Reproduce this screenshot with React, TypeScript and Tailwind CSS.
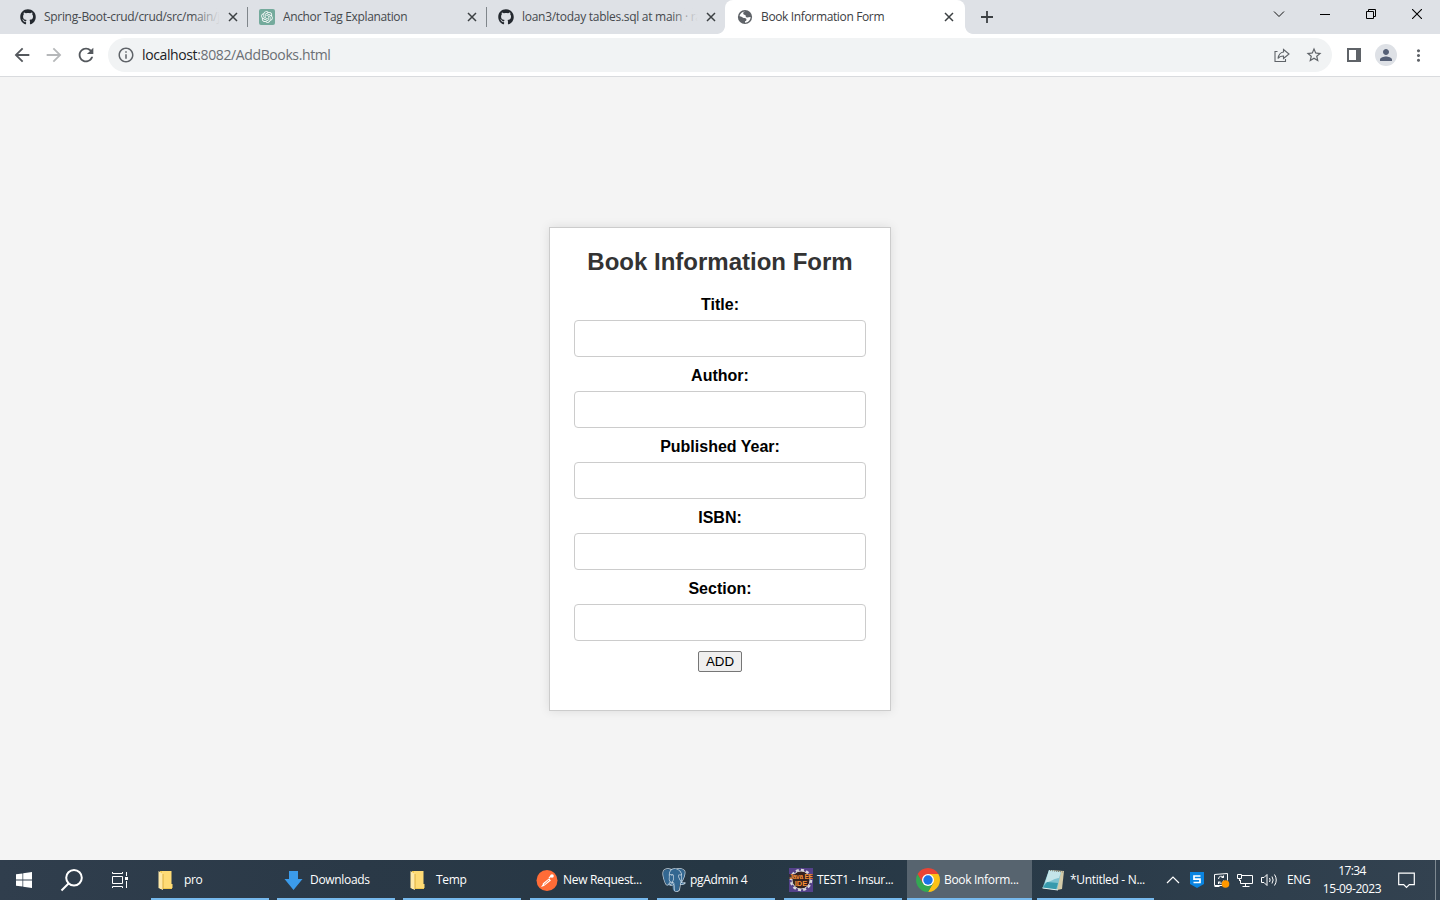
import type { ReactNode } from "react";
import { FaGithub } from "react-icons/fa";
import { RiOpenaiFill } from "react-icons/ri";
import { SiPostgresql } from "react-icons/si";
import { MdArrowBack, MdArrowForward, MdRefresh, MdInfoOutline, MdStarBorder, MdPerson, MdMoreVert } from "react-icons/md";

function CloseIcon() {
  return (
    <svg width="10" height="10" viewBox="0 0 10 10" fill="none" stroke="#3c4043" strokeWidth="1.5">
      <path d="M1 1l8 8M9 1l-8 8" />
    </svg>
  );
}

function GlobeIcon() {
  return (
    <svg width="16" height="16" viewBox="0 0 16 16">
      <circle cx="8" cy="8" r="7.1" fill="#5f6368" />
      <path d="M8.6 2.4c-2 0-2.6 1-2.3 2.3.4 1.3 1.6.8 2.2 1.5.5.7-.1 1.6 1 2.1 1.3.6 2.6-.6 4.1-.3-.1 3.2-2.6 5.7-5.6 5.7v-1.5c1.3-.1 1.6-1.1 1.4-2-.3-1.3-1.7-.9-2.8-1.3C5.200 8.400 4.800 7.400 2.600 7.200 2.900 4.600 5.300 2.300 8.600 2.400z" fill="#fff" />
      <path d="M8.300 4.100l2.500-1.700 2.100 2.700-1.500 1.500-2-.5z" fill="#5f6368" />
    </svg>
  );
}

type TabProps = { icon: ReactNode; title: string; text: string; fade?: boolean; divider?: boolean };

function Tab({ icon, title, text, fade, divider }: TabProps) {
  return (
    <div className="relative flex h-[34px] w-[239px] items-center pl-3 pr-[10px]">
      <span className="flex w-6 shrink-0">{icon}</span>
      <span className={`relative w-[176px] shrink-0 overflow-hidden whitespace-nowrap text-[12px] text-[#45494d] ${text}`}>
        {title}
        {fade && <span className="absolute inset-y-0 right-0 w-7 bg-linear-to-r from-[#dee1e600] to-[#dee1e6]" />}
      </span>
      <span className="flex w-[22px] shrink-0 justify-center pl-[3px]">
        <CloseIcon />
      </span>
      {divider && <span className="absolute right-[-1px] top-[7px] h-5 w-px bg-[#80868b]" />}
    </div>
  );
}

function TabStrip() {
  return (
    <div className="flex h-[34px] bg-[#dee1e6] pl-2">
      <Tab icon={<FaGithub size={16} color="#24292f" />} title="Spring-Boot-crud/crud/src/main/java" text="tracking-[-0.31px]" fade divider />
      <Tab
        icon={
          <span className="flex h-4 w-4 items-center justify-center rounded-[2px] bg-[#74aa9c]">
            <RiOpenaiFill size={14} color="#fff" />
          </span>
        }
        title="Anchor Tag Explanation"
        text="tracking-[-0.36px]"
        divider
      />
      <Tab icon={<FaGithub size={16} color="#24292f" />} title="loan3/today tables.sql at main · rahul" text="tracking-[-0.28px]" fade />
      <div className="relative flex h-[34px] w-[240px] items-center rounded-t-lg bg-white pl-3">
        <span className="absolute bottom-0 left-[-8px] h-2 w-2 bg-[radial-gradient(circle_at_0_0,#dee1e6_7.500px,#fff_8.200px)]" />
        <span className="absolute bottom-0 right-[-8px] h-2 w-2 bg-[radial-gradient(circle_at_100%_0,#dee1e6_7.500px,#fff_8.200px)]" />
        <span className="w-6 shrink-0"><GlobeIcon /></span>
        <span className="w-[183px] whitespace-nowrap text-[12px] tracking-[-0.36px] text-[#3c4043]">Book Information Form</span>
        <CloseIcon />
      </div>
      <div className="flex w-11 items-center justify-center">
        <svg width="12" height="12" viewBox="0 0 12 12" stroke="#3c4043" strokeWidth="1.8"><path d="M6 0v12M0 6h12" /></svg>
      </div>
      <div className="ml-auto flex h-[28px] items-center text-black">
        <span className="flex w-[46px] justify-center"><svg width="12" height="12" viewBox="0 0 12 12" fill="none" stroke="#111"><path d="M1 3.500l5 5 5-5" /></svg></span>
        <span className="flex w-[46px] justify-center"><svg width="10" height="10" viewBox="0 0 10 10"><path d="M0 5h10v1H0z" /></svg></span>
        <span className="flex w-[46px] justify-center"><svg width="10" height="10" viewBox="0 0 10 10" fill="none" stroke="#000"><path d="M.5 2.500h7v7h-7zM2.500 2.500v-2h7v7h-2" /></svg></span>
        <span className="flex w-[46px] justify-center"><svg width="10" height="10" viewBox="0 0 10 10" stroke="#000" strokeWidth="1.1"><path d="M0 0l10 10M10 0L0 10" /></svg></span>
      </div>
    </div>
  );
}

function Toolbar() {
  return (
    <div className="flex h-[43px] items-start border-b border-[#d9dbde] bg-white pt-1">
      <div className="flex h-[34px] w-[108px] items-center pl-[11px]">
        <span className="w-8"><MdArrowBack size={22} color="#54585d" /></span>
        <span className="w-8"><MdArrowForward size={22} color="#b6b8ba" /></span>
        <MdRefresh size={22} color="#54585d" />
      </div>
      <div className="flex h-[34px] w-[1224px] items-center rounded-full bg-[#f1f3f4] pl-[9px] pr-[9px]">
        <MdInfoOutline size={18} color="#5f6368" />
        <span className="ml-[7px] mt-[-1px] whitespace-nowrap text-[14px] tracking-[-0.38px] text-[#6b6f74]">
          <span className="text-[#202124]">localhost</span>:8082/AddBooks.html
        </span>
        <svg className="ml-auto" width="16" height="16" viewBox="0 0 16 16" fill="none" stroke="#5f6368" strokeWidth="1.1">
          <path d="M3.500 4.500H1v10h10.500V12" />
          <path d="M9.500 2.500L15 7l-5.500 4.500V9c-2.500 0-4.300.7-5.500 2.500C4.500 8 6.200 5.500 9.500 5z" />
        </svg>
        <MdStarBorder className="ml-[15px]" size={18} color="#5f6368" />
      </div>
      <div className="flex h-[34px] flex-1 items-center pl-[15px]">
        <svg width="14" height="14" viewBox="0 0 14 14"><path d="M0 0h14v14H0zM2 2v10h7V2z" fill="#5f6368" fillRule="evenodd" /></svg>
        <span className="ml-[14px] flex h-[22px] w-[22px] items-center justify-center rounded-full bg-[#dee1e6]"><MdPerson size={18} color="#566076" /></span>
        <MdMoreVert className="ml-3" size={19} color="#5f6368" />
      </div>
    </div>
  );
}

const fields = ["Title:", "Author:", "Published Year:", "ISBN:", "Section:"];

function BookForm() {
  return (
    <form className="flex h-[484px] w-[342px] flex-col items-center border border-[#ccc] bg-white pt-[20px] font-['Liberation_Sans',Arial,sans-serif] shadow-[0_0_10px_rgba(0,0,0,0.1)]">
      <h2 className="mb-[20px] h-7 whitespace-nowrap text-[24px] font-bold leading-7 text-[#333]">Book Information Form</h2>
      {fields.map((label) => (
        <label key={label} className="mb-[10px] flex flex-col items-center text-[16px] font-bold leading-[18px] text-black">
          <span className="mb-[6px] h-[18px]">{label}</span>
          <input type="text" className="h-[37px] w-[292px] rounded-[4px] border border-[#ccc] bg-white p-2" />
        </label>
      ))}
      <button type="button" className="h-[21px] w-[44px] rounded-[2px] border border-[#767676] bg-[#efefef] text-[13.333px] leading-[18px] text-black">ADD</button>
    </form>
  );
}

function FolderIcon() {
  return (
    <svg width="24" height="24" viewBox="0 0 24 24">
      <path d="M4 3h11v13h1v5H4z" fill="#f2c94f" />
      <path d="M6 3h9.500v13h1v4H6z" fill="#ffdb75" />
      <path d="M2.500 3l4.500 3v16l-4.500-2z" fill="#ffe9a8" />
      <path d="M7 6v15" stroke="#dcae3e" />
    </svg>
  );
}

function DownloadIcon() {
  return <svg width="24" height="24" viewBox="0 0 24 24"><path d="M7 3h9v8h4.500L11.500 22 2.500 11H7z" fill="#3b9bea" /></svg>;
}

function PostmanIcon() {
  return (
    <svg width="24" height="24" viewBox="0 0 24 24">
      <circle cx="12" cy="12.500" r="10.500" fill="#ff6c37" />
      <path d="M6 19l2-3 6-5.500 2 2L9 18z" fill="#fff" />
      <path d="M14 10l2.500-2.500M8 16l6.500-5" stroke="#fff" strokeWidth="1.300" />
      <circle cx="17" cy="8" r="1.800" fill="#fff" />
      <path d="M9 16.500l5-4.500" stroke="#ff6c37" strokeWidth=".8" />
    </svg>
  );
}

function ElephantIcon() {
  return (
    <span className="relative flex h-6 w-6">
      <svg className="absolute inset-0" width="24" height="24" viewBox="0 0 24 24">
        <path d="M1 6C1 2 4 .6 8 1.500 10 .6 13 .3 15 1c4-1 8 .8 8 4.500 0 3-1.500 6-3.200 8.500 1.500.8 2.700.9 3.200 1-1 1.800-3 2-5.500 1.800L17 21c-.5 2-2 2.500-3.500 2.500-2 0-2.700-1.500-2.900-3.500l-.2-3C8.500 17 7.500 17 6 17.500 3 15 1 10 1 6z" fill="#336791" />
      </svg>
      <SiPostgresql className="relative" size={24} color="#c6d5e1" />
    </span>
  );
}

function EclipseIcon() {
  return (
    <svg width="24" height="24" viewBox="0 0 24 24">
      <rect width="24" height="24" fill="#54418a" />
      <circle cx="12" cy="12" r="10" fill="none" stroke="#d9d7dd" strokeWidth="2.500" strokeDasharray="3 2.200" />
      <circle cx="12" cy="12" r="9" fill="#33211f" stroke="#ccc" />
      <path d="M0 6h24v5H0z" fill="#33211f" opacity=".75" />
      <g fill="#f58f35" fontFamily="Liberation Sans" fontWeight="700" textAnchor="middle">
        <text x="12" y="11" fontSize="6.500" letterSpacing="-.2">Java EE</text>
        <text x="12" y="18" fontSize="7.500">IDE</text>
      </g>
    </svg>
  );
}

function ChromeIcon() {
  return (
    <svg width="24" height="24" viewBox="0 0 24 24">
      <path d="M12 6h10.390A12 12 0 0 1 12 24l5.200-9z" fill="#fbc116" />
      <path d="M6.800 15L1.610 6A12 12 0 0 0 12 24l5.200-9z" fill="#34a853" />
      <path d="M1.610 6A12 12 0 0 1 22.390 6H12l-5.200 9z" fill="#ea4335" />
      <circle cx="12" cy="12" r="6" fill="#fff" />
      <circle cx="12" cy="12" r="4.700" fill="#1a73e8" />
    </svg>
  );
}

function NotepadIcon() {
  return (
    <svg width="24" height="24" viewBox="0 0 24 24">
      <path d="M8 2l14 1-2 18-5 1z" fill="#d3cba9" />
      <path d="M7 2l12 2-4 18L.5 20z" fill="#7fc3d1" />
      <path d="M7 2l12 2-2 6C13 10 8 14 3 15z" fill="#c4e5e9" />
      <path d="M.5 20L5 14l11 1-2 7z" fill="#379aad" />
      <path d="M8 2.500l13 1.500" stroke="#7b7c6e" strokeDasharray="1 1" />
      <path d="M.5 20L16 22" stroke="#e4f0ef" />
    </svg>
  );
}

type TaskProps = { icon: ReactNode; label: string; cell: string; active?: boolean };

const tasks: TaskProps[] = [
  { icon: <FolderIcon />, label: "pro", cell: "w-[118px] mr-2" },
  { icon: <DownloadIcon />, label: "Downloads", cell: "w-[118px] mr-2" },
  { icon: <FolderIcon />, label: "Temp", cell: "w-[118px] mr-[9px]" },
  { icon: <PostmanIcon />, label: "New Request...", cell: "w-[118px] mr-[9px]" },
  { icon: <ElephantIcon />, label: "pgAdmin 4", cell: "w-[118px] mr-[9px]" },
  { icon: <EclipseIcon />, label: "TEST1 - Insur...", cell: "w-[118px] mr-[5px]" },
  { icon: <ChromeIcon />, label: "Book Inform...", cell: "w-[125px] mr-[5px] pl-[9px] bg-[#57646f]", active: true },
  { icon: <NotepadIcon />, label: "*Untitled - N...", cell: "w-[117px]" },
];

function Task({ icon, label, cell, active }: TaskProps) {
  return (
    <div className={`flex h-10 shrink-0 items-center border-b-2 border-[#76b9ed] pt-px ${cell} ${active ? "" : "pl-[5px]"}`}>
      <span className="flex w-7 shrink-0">{icon}</span>
      <span className="whitespace-nowrap pt-px text-[12px] tracking-[-0.32px] text-white">{label}</span>
    </div>
  );
}

function Taskbar() {
  return (
    <div className="flex h-10 items-center bg-[linear-gradient(90deg,#303e4d_0%,#2a3947_25%,#263744_50%,#2a3b49_75%,#334250_100%)] text-white">
      <div className="flex w-12 justify-center">
        <svg width="16" height="16" viewBox="0 0 16 16" fill="#fff"><path d="M0 2.300l6.500-.9v6.200H0zM7.200 1.300L16 0v7.600H7.200zM0 8.400h6.500v6.200L0 13.700zM7.200 8.400H16V16l-8.800-1.300z" /></svg>
      </div>
      <div className="flex w-12 justify-center">
        <svg width="24" height="24" viewBox="0 0 24 24" fill="none" stroke="#fff" strokeWidth="2"><circle cx="14" cy="9.800" r="7.800" /><path d="M8.500 15.500l-7 7" /></svg>
      </div>
      <div className="flex w-12 justify-center">
        <svg width="18" height="16" viewBox="0 0 18 16" fill="none" stroke="#fff"><path d="M1.500 4.500h10v7h-10zM1.500 0v1.500h10V0M1.500 16v-1.500h10V16M15.500 0v4M15.500 9v7" /><path d="M14 5h3v3h-3z" fill="#fff" stroke="none" /></svg>
      </div>
      <div className="ml-[7px] flex w-[1003px]">{tasks.map((t) => <Task key={t.label} {...t} />)}</div>
      <div className="ml-[12px] flex flex-1 items-center">
        <svg width="14" height="8" viewBox="0 0 14 8" fill="none" stroke="#fff" strokeWidth="1.200"><path d="M1 7l6-6 6 6" /></svg>
        <svg className="ml-[10px]" width="14" height="16" viewBox="0 0 14 16"><path d="M0 0h14v12l-7 4-7-4z" fill="#0a84e0" /><path d="M10.500 4H4v3.200h6v3.300H3.500" fill="none" stroke="#fff" strokeWidth="1.700" /></svg>
        <svg className="ml-[9px]" width="17" height="16" viewBox="0 0 17 16" fill="none" stroke="#fff"><path d="M9 13.500H1.500v-11l13-1v7M1.500 14.500h5" /><path d="M5.500 7a2.700 2.700 0 0 1 5-1.500V3.500M10.500 5.500h-2M10.500 8.500a2.700 2.700 0 0 1-5 1.500v2M5.500 10h2" /><circle cx="12.500" cy="12" r="3.800" fill="#ff9800" stroke="none" /></svg>
        <svg className="ml-[7px]" width="17" height="15" viewBox="0 0 17 15" fill="none" stroke="#fff"><path d="M5 2.500h10.500v8H3.500V7M8.500 10.500v3M5.500 13.500h7M.5 1.500h4v4h-4zM2.500 5.500V8" /></svg>
        <svg className="ml-[7px]" width="17" height="14" viewBox="0 0 17 14" fill="none" stroke="#fff"><path d="M.5 4.500h2.500l3-3v11l-3-3H.5zM8.500 5q1.300 2 0 4M11 3.500q2.300 3.500 0 7M13.500 1.500q3.500 5.500 0 11" /></svg>
        <span className="ml-[9px] w-[24px] text-[12px] tracking-[-0.4px]">ENG</span>
        <div className="ml-[9px] flex w-[64px] flex-col items-center whitespace-nowrap text-[12px] leading-[18px]">
          <span className="tracking-[-0.6px]">17:34</span>
          <span className="tracking-[-0.42px]">15-09-2023</span>
        </div>
        <svg className="ml-[14px]" width="17" height="17" viewBox="0 0 17 17" fill="none" stroke="#fff" strokeWidth="1.200"><path d="M.7 1.100h15.600v11.500h-5L8.500 15.500l-2.800-2.900h-5z" /></svg>
        <span className="ml-auto mr-1 h-10 w-px bg-[#7e8991]" />
      </div>
    </div>
  );
}

export default function App() {
  return (
    <div className="flex h-[900px] w-[1440px] flex-col overflow-hidden font-['Open_Sans','Noto_Sans',sans-serif]">
      <TabStrip />
      <Toolbar />
      <main className="flex flex-1 items-start justify-center bg-[#f4f4f4] pt-[150px]">
        <BookForm />
      </main>
      <Taskbar />
    </div>
  );
}
